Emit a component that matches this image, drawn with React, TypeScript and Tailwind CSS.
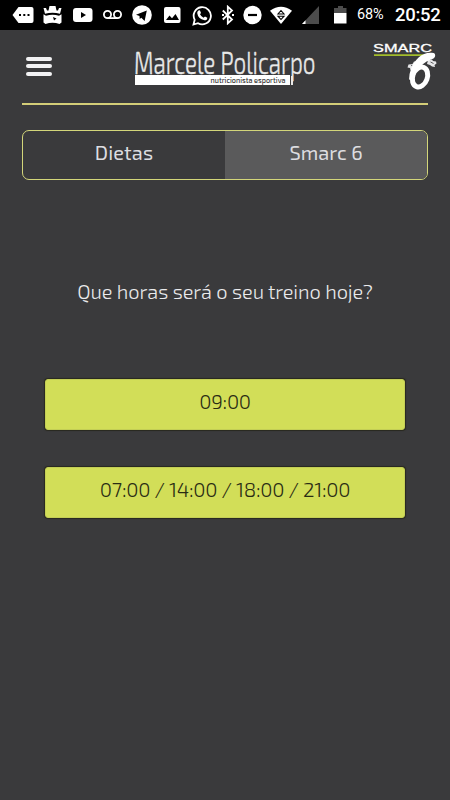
import type { ReactNode } from "react";

function StatusBar() {
  return (
    <div className="flex h-[30px] items-center bg-black text-white">
      {/* Messages */}
      <svg className="ml-3 shrink-0" width="22" height="20" viewBox="0 0 22 20" fill="white">
        <path d="M6.500 2H19.500Q21.500 2 21.500 4V16Q21.500 18 19.500 18H6.500L.5 10Z" />
        <path d="M7 9h2v2H7zM11.300 9h2v2h-2zM15.500 9h2v2h-2z" fill="black" />
      </svg>
      {/* Crown */}
      <svg className="ml-[9px] shrink-0" width="19" height="20" viewBox="0 0 19 20" fill="white">
        <path d="M.5 3H3L4 5.500H5.500L6.500 1H12.500L13.500 5.500H15L16 3H18.500L17 8.800Q9.500 6.800 2 8.800Z" />
        <path d="M.5 9.200L3 10.800Q9.500 8.800 16 10.800L18.500 9.200V17.500L16.500 19Q9.500 16.500 2.500 19L.5 17.500Z" />
        <path d="M10 12l3.500 1.500-2.500 2z" fill="black" />
      </svg>
      {/* YouTube */}
      <svg className="ml-[11px] shrink-0" width="20" height="16" viewBox="0 0 20 16">
        <rect x="0" y="1" width="19.500" height="14" rx="3" fill="white" />
        <path d="M8 5v6l5-3z" fill="black" />
      </svg>
      {/* Voicemail */}
      <svg className="ml-2.5 shrink-0" width="19" height="12" viewBox="0 0 19 12" fill="none" stroke="white" strokeWidth="1.800">
        <circle cx="4.500" cy="5.500" r="3.600" />
        <circle cx="14.500" cy="5.500" r="3.600" />
        <path d="M4.500 9.100h10" />
      </svg>
      {/* Telegram */}
      <svg className="ml-[10px] shrink-0" width="20" height="20" viewBox="0 0 20 20">
        <circle cx="10" cy="10" r="9.800" fill="white" />
        <path d="M4 9.800L14.800 5.400L12.600 16L9.300 12.800L7.700 14L7.500 11Z" fill="black" />
      </svg>
      {/* Picture */}
      <svg className="ml-[12px] shrink-0" width="17" height="18" viewBox="0 0 17 18">
        <rect x="0" y="1" width="16.500" height="16" rx="2" fill="white" />
        <path d="M2 14L5.500 9.500L8 12.300L11.500 8L15 14Z" fill="black" />
      </svg>
      {/* WhatsApp */}
      <svg className="ml-[11px] shrink-0" width="20" height="21" viewBox="0 0 20 21">
        <path d="M1.500 19.500L2.700 14.800A8.600 8.600 0 1 1 6 18.200Z" fill="none" stroke="white" strokeWidth="1.800" />
        <path d="M6.200 5.700Q7.200 4.800 8 5.600L9 8L8 9.300Q9.200 11.700 11.500 12.700L13 11.500L15.300 12.700Q15.400 15.200 12.500 15.300Q6 14 5.200 8Q5.200 6.600 6.200 5.700Z" fill="white" />
      </svg>
      {/* Bluetooth */}
      <svg className="ml-2.5 shrink-0" width="12" height="20" viewBox="0 0 12 20" fill="none" stroke="white" strokeWidth="1.800">
        <path d="M.8 5.500L10 14.500L5.800 18.300V1.700L10 5.500L.8 14.500" />
        <path d="M0 9h2v2H0zM10 9h2v2h-2z" fill="white" stroke="none" />
      </svg>
      {/* Do not disturb */}
      <svg className="ml-[9px] shrink-0" width="19" height="20" viewBox="0 0 19 20">
        <circle cx="9.500" cy="10" r="9.200" fill="white" />
        <path d="M5 8.900h9v2.200H5z" fill="black" />
      </svg>
      {/* Wifi */}
      <svg className="ml-[8px] shrink-0" width="22" height="20" viewBox="0 0 22 20">
        <path d="M0 5.800Q11-2.500 22 5.800L11 19Z" fill="white" />
        <path d="M11 5.500L14 9H8ZM8 11.200h6L11 14.500Z" fill="none" stroke="black" strokeWidth="1.100" />
      </svg>
      {/* Signal */}
      <svg className="ml-2.5 shrink-0" width="18" height="20" viewBox="0 0 18 20">
        <path d="M17 1V19H0Z" fill="#4c4c4c" />
        <path d="M3.500 15.300V19H0Z" fill="white" />
      </svg>
      {/* Battery */}
      <svg className="ml-3.5 shrink-0" width="13" height="20" viewBox="0 0 13 20">
        <path d="M0 3H4V1H9V3H12.500V8H0Z" fill="#4c4c4c" />
        <path d="M0 8h12.500v10.500H0z" fill="white" />
      </svg>
      <span className="ml-[10px] w-[28px] shrink-0 font-['Roboto',sans-serif] text-[14.500px] leading-5 tracking-[-0.2px]">68%</span>
      <span className="ml-[10px] shrink-0 font-['Roboto',sans-serif] text-[18.500px] font-medium leading-[22px] tracking-[-0.3px]">20:52</span>
    </div>
  );
}

function BrandLogo() {
  return (
    <svg className="ml-[82px] mt-3 shrink-0" width="184" height="48" viewBox="0 -4 184 48">
      <text x="0" y="27.500" fontSize="31.500" textLength="181.500" lengthAdjust="spacingAndGlyphs" fill="#e9e9e9" fontFamily="'Exo 2', Roboto, sans-serif" fontWeight="300" stroke="#e9e9e9" strokeWidth=".4">
        Marcele Policarpo
      </text>
      <path d="M158 30v9" stroke="#e9e9e9" strokeWidth="2" />
      <rect x="1" y="29" width="155" height="10" fill="white" />
      <text x="76.500" y="36.500" fontSize="8.500" textLength="75" lengthAdjust="spacingAndGlyphs" fill="#303030" fontFamily="'Exo 2', Roboto, sans-serif" fontWeight="500">
        nutricionista esportiva
      </text>
    </svg>
  );
}

function SmarcLogo() {
  return (
    <svg className="ml-auto mr-2.5 mt-3 shrink-0" width="68" height="52" viewBox="0 0 68 52">
      <text x="1" y="10.400" fontSize="11.500" fontWeight="500" textLength="59" lengthAdjust="spacingAndGlyphs" fill="white" fontFamily="'Liberation Sans', sans-serif" stroke="white" strokeWidth=".3">
        SMARC
      </text>
      <path d="M2 13.200h55" stroke="#a3bd2c" strokeWidth="1.800" />
      {/* Paws on both sides of the digit */}
      <path fill="#e6e6e8" d="M47 19l-5 .5-1.500 2.500-4 .5-1 3 2.500 .5.5 2 3 1 5-5zM56 18l4-.5 1 1.500 3 .5.5 2-2 1.500.5 2-3-.5-2-1.500-3-1z" />
      <path d="M39 23l2.500 2M58.500 20l3 1.500" stroke="#3a3a3c" strokeWidth=".8" fill="none" />
      <ellipse cx="48" cy="35" rx="7.300" ry="10.200" transform="rotate(20 48 35)" fill="none" stroke="white" strokeWidth="5" />
      <path fill="white" d="M61.500 11C52 9 43 16 39 27Q37 32 37 38L43 33C46 26 51 20 61.500 16.500C64 15 63.500 11.500 61.500 11Z" />
    </svg>
  );
}

function Header() {
  return (
    <header className="mx-[22px] h-[75px] border-b-2 border-[#d3cd78]">
      <div className="-mr-[22px] flex items-start">
        <button className="ml-1 mt-[26.500px] flex w-[26px] shrink-0 flex-col gap-[3.500px]" aria-label="Menu">
          <span className="h-[4px] w-full rounded-full bg-[#f2f2f4]" />
          <span className="h-[4px] w-full rounded-full bg-[#f2f2f4]" />
          <span className="h-[4px] w-full rounded-full bg-[#f2f2f4]" />
        </button>
        <BrandLogo />
        <SmarcLogo />
      </div>
    </header>
  );
}

function TimeButton({ children }: { children: ReactNode }) {
  return (
    <button className="flex h-[51px] w-full justify-center rounded-[3px] border border-[#c3ce55] bg-[#d2de58] pt-[7px] text-[20.500px] font-light leading-7 tracking-[-0.27px] text-[#2a2c14] shadow-[0_0_1px_1px_#29291f]">
      {children}
    </button>
  );
}

export default function App() {
  return (
    <div className="flex h-[800px] w-[450px] flex-col overflow-hidden bg-[#3a3a3c] font-['Exo_2','Roboto',sans-serif]">
      <StatusBar />
      <Header />

      {/* Tabs */}
      <div className="mx-[22px] mt-[25px] flex h-[50px] shrink-0 overflow-hidden rounded-[7px] border-[1.500px] border-[#d3d67a] text-[20px] leading-7 text-[#dddde0]">
        <button className="flex flex-1 justify-center pt-[7px]">
          <span className="tracking-[0.1px]">Dietas</span>
        </button>
        <button className="flex flex-1 justify-center bg-[#5a5a5b] pt-[7px]">
          <span>Smarc 6</span>
        </button>
      </div>

      <p className="mt-[97px] text-center text-[20px] font-light leading-7 tracking-[-0.07px] text-[#eaeaec]">
        Que horas será o seu treino hoje?
      </p>

      <div className="mx-[45px] mt-[74px] flex flex-col gap-[37px]">
        <TimeButton>09:00</TimeButton>
        <TimeButton>07:00 / 14:00 / 18:00 / 21:00</TimeButton>
      </div>
    </div>
  );
}
